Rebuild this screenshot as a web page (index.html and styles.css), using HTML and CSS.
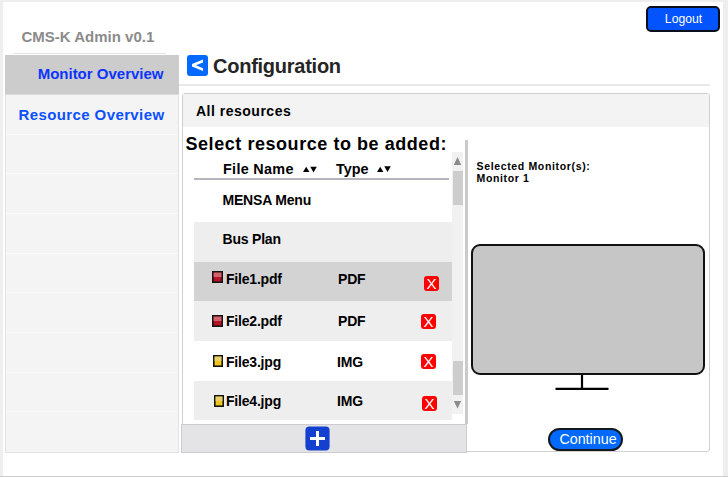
FILE: index.html
```html
<!DOCTYPE html>
<html lang="en">
<head>
<meta charset="utf-8">
<title>CMS-K Admin</title>
<link rel="stylesheet" href="styles.css">
</head>
<body>
<div class="page">
  <aside class="sidebar">
    <div class="brand">CMS-K Admin v0.1</div>
    <div class="brand-line"></div>
    <nav class="menu">
      <a class="item active">Monitor Overview</a>
      <a class="item second">Resource Overview</a>
      <span class="item"></span><span class="item"></span><span class="item"></span><span class="item"></span><span class="item"></span><span class="item"></span><span class="item"></span><span class="item"></span>
    </nav>
  </aside>
  <main class="main">
    <div class="top"><button class="logout">Logout</button></div>
    <header class="heading">
      <svg class="back" viewBox="0 0 21 21"><rect width="21" height="21" rx="3" fill="#0569ff"/><path d="M16 4.6V7.4L9 10.3L16 13.2V16L5 11.5V9.1Z" fill="#fff"/></svg>
      <h1>Configuration</h1>
    </header>
    <section class="panel">
      <div class="panel-title">All resources</div>
      <div class="panel-body">
        <div class="left">
          <h2>Select resource to be added:</h2>
          <div class="list">
            <div class="table">
              <div class="thead">
                <span class="h-name">File Name</span>
                <svg class="sort" viewBox="0 0 14 7"><path d="M0 6L3.2 .8L6.4 6ZM7.3 .8H13.8L10.5 6.4Z"/></svg>
                <span class="h-type">Type</span>
                <svg class="sort" viewBox="0 0 14 7"><path d="M0 6L3.2 .8L6.4 6ZM7.3 .3H13.8L10.5 5.9Z"/></svg>
              </div>
              <div class="row r1"><span class="name plain">MENSA Menu</span></div>
              <div class="row r2"><span class="name plain">Bus Plan</span></div>
              <div class="row r3"><svg class="mark pdf" viewBox="0 0 11 12"><rect x=".8" y=".8" width="9.4" height="10.4"/><path d="M1.6 1.6H9.4V6H1.6Z"/></svg><span class="name">File1.pdf</span><span class="type">PDF</span><button class="del">X</button></div>
              <div class="row r4"><svg class="mark pdf" viewBox="0 0 11 12"><rect x=".8" y=".8" width="9.4" height="10.4"/><path d="M1.6 1.6H9.4V6H1.6Z"/></svg><span class="name">File2.pdf</span><span class="type">PDF</span><button class="del">X</button></div>
              <div class="row r5"><svg class="mark img" viewBox="0 0 10 12"><rect x=".8" y=".8" width="8.4" height="10.4"/><path d="M1.6 1.6H8.4V6H1.6Z"/></svg><span class="name">File3.jpg</span><span class="type">IMG</span><button class="del">X</button></div>
              <div class="row r6"><svg class="mark img" viewBox="0 0 10 12"><rect x=".8" y=".8" width="8.4" height="10.4"/><path d="M1.6 1.6H8.4V6H1.6Z"/></svg><span class="name">File4.jpg</span><span class="type">IMG</span><button class="del">X</button></div>
            </div>
            <div class="scroll">
              <svg viewBox="0 0 11 19"><path d="M1.8 13L5.5 5L9.2 13Z"/></svg>
              <span class="thumb upper"></span>
              <span class="thumb lower"></span>
              <svg viewBox="0 0 11 19"><path d="M1.8 6H9.2L5.5 13.5Z"/></svg>
            </div>
          </div>
          <div class="add-bar">
            <svg viewBox="0 0 25 25"><rect x=".4" y=".4" width="24.2" height="24.2" rx="4" fill="#1440d0"/><path d="M5 12.5H20M12.5 5V20" stroke="#fff" stroke-width="3"/></svg>
          </div>
        </div>
        <div class="divider"></div>
        <div class="right">
          <div class="selected">Selected Monitor(s):<br>Monitor 1</div>
          <div class="screen"></div>
          <svg class="stand" viewBox="0 0 54 16"><path d="M27 0V14.5M.5 13.8H53.5" fill="none" stroke="#000" stroke-width="2.2"/></svg>
          <button class="continue">Continue</button>
        </div>
      </div>
    </section>
  </main>
</div>
</body>
</html>
```
FILE: styles.css
```css
* { box-sizing: border-box; }
body {
  margin: 0;
  width: 728px;
  height: 477px;
  padding: 2px 5px 0 3px;
  background: #eee;
  border-bottom: 1px solid #ccc;
  font-family: "Liberation Sans", Arial, sans-serif;
  font-weight: bold;
  color: #000;
  overflow: hidden;
}
button { font: inherit; margin: 0; padding: 0; border: 0; }
svg { display: block; }
h1, h2 { margin: 0; font-weight: bold; }
.page {
  display: grid;
  grid-template-columns: 174px 1fr;
  height: 474px;
  padding-left: 2px;
  background: #fff;
}

/* Sidebar */
.brand {
  padding: 25px 0 0 16.5px;
  font-size: 15px;
  line-height: 20px;
  height: 51px;
  color: #8b8b8b;
  white-space: nowrap;
}
.brand-line {
  width: 152px;
  height: 2px;
  margin-left: 9px;
  border-top: 1px solid #e2e2e2;
}
.menu {
  display: grid;
  grid-template-rows: 40px repeat(9, 1fr);
  height: 398px;
  border: 1px solid #e2e2e4;
  border-top: 0;
  background: #f4f4f4;
}
.item {
  border-bottom: 1px solid #fafafa;
  padding: 9px 14px 0 0;
  text-align: right;
  font-size: 15px;
  line-height: 20px;
  color: #0b50ff;
}
.item:last-child { border-bottom: 0; }
.active { background: #ccc; color: #0b35ff; margin: 0 -1px; padding-right: 15.5px; border-color: #ddd; }
.second { padding-top: 10px; padding-right: 13.5px; letter-spacing: .4px; }

/* Heading */
.top { height: 53px; padding: 4px 3px 0 0; display: flex; justify-content: flex-end; }
.logout {
  width: 74px;
  height: 26px;
  border: 2px solid #0a0f1c;
  border-radius: 5px;
  background: #0353ff;
  color: #fff;
  font-weight: normal;
  font-size: 12.2px;
  line-height: 22px;
  padding-left: 1px;
}
.heading {
  display: flex;
  width: 531px;
  height: 31px;
  padding-left: 8px;
  border-bottom: 2px solid #e9e9e9;
}
.back { width: 21px; height: 21px; }
h1 { margin: -1px 0 0 5px; font-size: 20px; line-height: 24px; letter-spacing: -.25px; color: #252525; }

/* Panel */
.panel {
  width: 528px;
  height: 359px;
  margin: 7px 0 0 3px;
  border: 1px solid #d0d0d3;
  border-radius: 3px;
}
.panel-title {
  height: 33px;
  padding: 7px 0 0 13px;
  background: #f3f3f3;
  font-size: 14px;
  line-height: 20px;
  letter-spacing: .5px;
}
.panel-body { display: grid; grid-template-columns: 282px 3px 1fr; height: 325px; }
.left { display: flex; flex-direction: column; }
h2 {
  height: 25px;
  padding: 5px 0 0 2.5px;
  font-size: 18px;
  line-height: 24px;
  letter-spacing: .55px;
  white-space: nowrap;
}
.list { display: flex; width: 269px; height: 272px; margin-left: 11px; }
.table { width: 258px; font-size: 14px; line-height: 20px; letter-spacing: -.2px; }
.thead {
  display: flex;
  height: 28px;
  padding: 7px 0 0 29px;
  margin-right: 3px;
  border-bottom: 2px solid #b5b5bb;
  font-size: 14.4px;
}
.h-name { width: 80px; letter-spacing: .3px; }
.h-type { width: 41px; margin-left: 19px; letter-spacing: 0; }
.sort { width: 14px; height: 7px; margin-top: 7px; }
.row { display: grid; grid-template-columns: 32px 112px 83px 16px; align-items: start; height: 40px; }
.plain { grid-column: 1 / 3; padding-left: 28.5px; }
.r1 { height: 42px; padding-top: 10px; }
.r2 { padding-top: 7px; background: #eee; }
.r3 { height: 39px; padding-top: 7px; background: #d3d3d3; }
.r4 { padding-top: 10px; background: #eee; }
.r5 { padding-top: 11px; }
.r6 { height: 39px; padding-top: 10px; background: #eee; }
.mark { width: 11px; height: 12px; stroke: #141414; stroke-width: 1.6; }
.mark path { stroke: none; }
.pdf { fill: #b51226; }
.pdf path { fill: #d0636c; }
.img { width: 10px; fill: #edc51c; }
.img path { fill: #e9cf69; }
.r3 .mark { margin: 2px 0 0 18px; }
.r4 .mark { margin: 4px 0 0 18px; }
.r5 .mark { margin: 3px 0 0 19px; }
.r6 .mark { margin: 4px 0 0 20px; }
.del {
  width: 15px;
  height: 15px;
  border-radius: 3px;
  background: #f00;
  color: #fff;
  font-size: 15px;
  font-weight: normal;
  letter-spacing: 0;
  line-height: 15px;
}
.r3 .del { margin: 7px 0 0 3px; }
.r4 .del { margin-top: 3px; }
.r5 .del { margin-top: 2px; }
.r6 .del { margin: 5px 0 0 1px; }
.r5 .type, .r6 .type { margin-left: -1px; }

.scroll { display: flex; flex-direction: column; width: 11px; height: 262px; background: #f1f1f1; }
.scroll svg { width: 11px; height: 19px; fill: #8b8b8b; }
.thumb { height: 34px; margin-left: 1px; background: #cdcdcd; }
.lower { margin-top: auto; }
.add-bar {
  display: flex;
  width: 286px;
  height: 29px;
  margin-left: -2px;
  padding: 1px 0 0 123px;
  border: 1px solid #cbcbd0;
  background: #e4e4e7;
  z-index: 1;
}
.add-bar svg { width: 25px; height: 25px; }
.divider { height: 284px; margin-top: 13px; background: #cacaca; }

/* Monitor preview */
.right { display: flex; flex-direction: column; padding-left: 3px; }
.selected {
  height: 117px;
  padding: 33px 0 0 5.5px;
  font-size: 10.5px;
  line-height: 12px;
  letter-spacing: .65px;
}
.screen { width: 234px; height: 131px; border: 2px solid #111; border-radius: 9px; background: #c6c6c6; }
.stand { width: 54px; height: 16px; margin-left: 84px; }
.continue {
  width: 75px;
  height: 23px;
  margin: 37px 0 0 77px;
  padding-left: 5px;
  border: 2px solid #14191f;
  border-radius: 11.5px;
  background: #006aff;
  color: #fff;
  font-size: 14.3px;
  font-weight: normal;
  line-height: 17px;
}
```
